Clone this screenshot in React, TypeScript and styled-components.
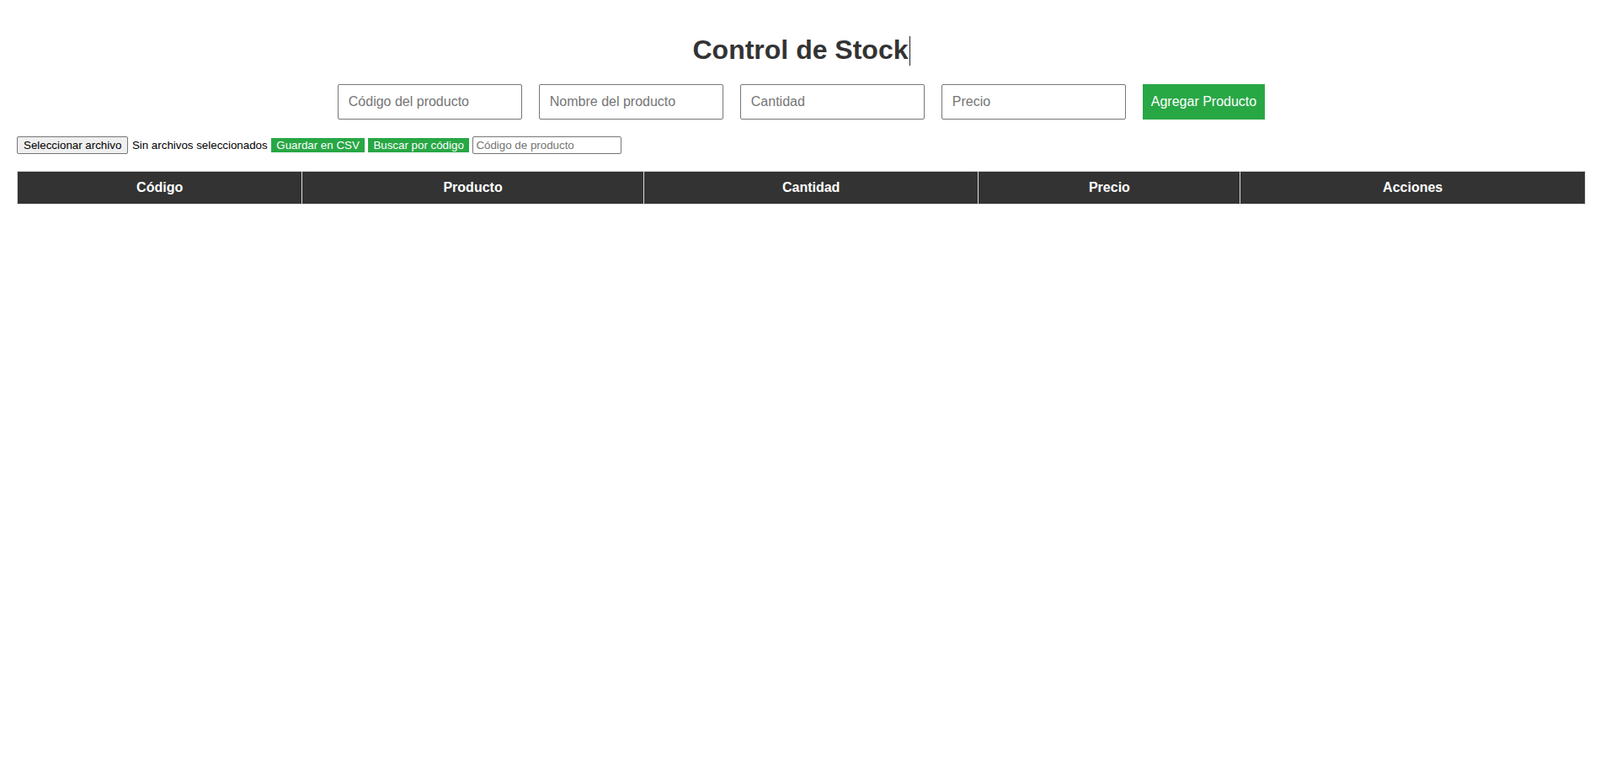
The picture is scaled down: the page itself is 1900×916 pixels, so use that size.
import React from "react";
import styled, { createGlobalStyle } from "styled-components";

const GlobalStyle = createGlobalStyle`
  body {
    margin: 0;
    background: #ffffff;
    font-family: "Liberation Sans", Arial, sans-serif;
  }
`;

const Page = styled.div`
  padding: 20px 17px 20px 20px;
`;

const Title = styled.h1`
  margin: 21.44px 0;
  text-align: center;
  font-size: 32px;
  font-weight: bold;
  color: #333333;
`;

const Caret = styled.span`
  display: inline-block;
  width: 1px;
  height: 35px;
  margin-left: 1px;
  background: #222222;
  vertical-align: -8px;
`;

const ProductForm = styled.div`
  display: flex;
  justify-content: center;
  gap: 20px;
  margin-bottom: 20px;
`;

const Field = styled.input`
  box-sizing: border-box;
  width: 219px;
  height: 42px;
  padding: 0 12px;
  border: 1px solid #767676;
  border-radius: 2px;
  font-family: "Liberation Sans", Arial, sans-serif;
  font-size: 16px;
  color: #333333;
  &::placeholder {
    color: #757575;
  }
`;

const PrimaryButton = styled.button`
  height: 42px;
  padding: 0 10px;
  border: none;
  background: #28a745;
  color: #ffffff;
  font-family: "Liberation Sans", Arial, sans-serif;
  font-size: 16px;
  cursor: pointer;
`;

const Toolbar = styled.div`
  display: flex;
  align-items: center;
  gap: 4.6px;
  height: 21px;
  margin-bottom: 20px;
  font-size: 13.333px;
  color: #000000;
`;

const FileButton = styled.label`
  box-sizing: border-box;
  display: inline-flex;
  align-items: center;
  height: 21px;
  padding: 0 7px;
  border: 1px solid #767676;
  border-radius: 2px;
  background: #efefef;
  color: #000000;
  font-size: 13.333px;
`;

const FileStatus = styled.span`
  font-size: 13.333px;
`;

const SmallButton = styled.button`
  height: 17px;
  padding: 0 6px;
  border: none;
  background: #28a745;
  color: #ffffff;
  font-family: "Liberation Sans", Arial, sans-serif;
  font-size: 13.333px;
  cursor: pointer;
`;

const SearchField = styled.input`
  box-sizing: border-box;
  width: 177px;
  height: 21px;
  padding: 1px 3px;
  border: 1px solid #767676;
  border-radius: 2px;
  font-family: "Liberation Sans", Arial, sans-serif;
  font-size: 13.333px;
  &::placeholder {
    color: #757575;
  }
`;

const Table = styled.table`
  width: 100%;
  border-collapse: collapse;
`;

const HeadCell = styled.th`
  padding: 10px;
  border: 1px solid #dddddd;
  background: #333333;
  color: #ffffff;
  font-size: 16px;
  font-weight: bold;
  text-align: center;
`;

const columns = ["Código", "Producto", "Cantidad", "Precio", "Acciones"];

export default function App() {
  return (
    <>
      <GlobalStyle />
      <Page>
        <Title>
          Control de Stock
          <Caret />
        </Title>
        <ProductForm>
          <Field placeholder="Código del producto" />
          <Field placeholder="Nombre del producto" />
          <Field placeholder="Cantidad" />
          <Field placeholder="Precio" />
          <PrimaryButton>Agregar Producto</PrimaryButton>
        </ProductForm>
        <Toolbar>
          <FileButton>Seleccionar archivo</FileButton>
          <FileStatus>Sin archivos seleccionados</FileStatus>
          <SmallButton>Guardar en CSV</SmallButton>
          <SmallButton>Buscar por código</SmallButton>
          <SearchField placeholder="Código de producto" />
        </Toolbar>
        <Table>
          <thead>
            <tr>
              {columns.map((c) => (
                <HeadCell key={c}>{c}</HeadCell>
              ))}
            </tr>
          </thead>
          <tbody />
        </Table>
      </Page>
    </>
  );
}
